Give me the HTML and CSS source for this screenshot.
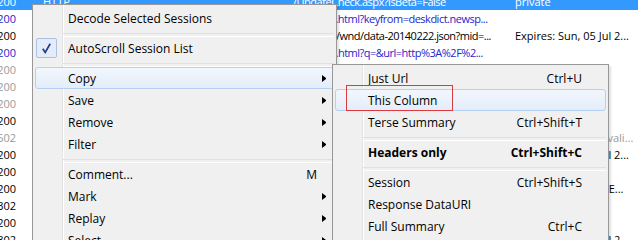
FILE: index.html
```html
<!DOCTYPE html>
<html lang="en">
<head>
    <meta charset="UTF-8">
    <title>Sessions context menu</title>
    <link rel="stylesheet" href="styles.css">
</head>
<body>
    <div class="sessions">
        <div class="row selected">
            <span class="c-result">200</span><span class="c-proto">HTTP</span>
            <span class="c-url">/UpdateCheck.aspx?isBeta=False</span><span class="c-cache">private</span>
        </div>
        <div class="row blue">
            <span class="c-result">200</span><span class="c-proto">HTTP</span>
            <span class="c-url">/m/index.html?keyfrom=deskdict.newsp...</span><span class="c-cache"></span>
        </div>
        <div class="row">
            <span class="c-result">200</span><span class="c-proto">HTTP</span>
            <span class="c-url">/pop_win/wnd/data-20140222.json?mid=...</span><span class="c-cache">Expires: Sun, 05 Jul 2...</span>
        </div>
        <div class="row blue">
            <span class="c-result">200</span><span class="c-proto">HTTP</span>
            <span class="c-url">/webLink.html?q=&amp;url=http%3A%2F%2...</span><span class="c-cache"></span>
        </div>
        <div class="row gray">
            <span class="c-result">200</span><span class="c-proto">HTTP</span>
            <span class="c-url">/stat.gif</span><span class="c-cache"></span>
        </div>
        <div class="row gray">
            <span class="c-result">200</span><span class="c-proto">HTTP</span>
            <span class="c-url">/stat.gif</span><span class="c-cache"></span>
        </div>
        <div class="row gray">
            <span class="c-result">200</span><span class="c-proto">HTTP</span>
            <span class="c-url">/stat.gif</span><span class="c-cache"></span>
        </div>
        <div class="row">
            <span class="c-result">200</span><span class="c-proto">HTTP</span>
            <span class="c-url">/index.html</span><span class="c-cache"></span>
        </div>
        <div class="row gray">
            <span class="c-result">502</span><span class="c-proto">HTTP</span>
            <span class="c-url">/favicon.ico</span><span class="c-cache">no-cache, must-revali...</span>
        </div>
        <div class="row">
            <span class="c-result">200</span><span class="c-proto">HTTP</span>
            <span class="c-url">/css/main.css</span><span class="c-cache">Expires: Sun, 05 Jul 2...</span>
        </div>
        <div class="row">
            <span class="c-result">200</span><span class="c-proto">HTTP</span>
            <span class="c-url">/js/app.js</span><span class="c-cache"></span>
        </div>
        <div class="row">
            <span class="c-result">200</span><span class="c-proto">HTTP</span>
            <span class="c-url">/img/logo.png</span><span class="c-cache">max-age=604800; E...</span>
        </div>
        <div class="row">
            <span class="c-result">302</span><span class="c-proto">HTTP</span>
            <span class="c-url">/login</span><span class="c-cache"></span>
        </div>
        <div class="row">
            <span class="c-result">200</span><span class="c-proto">HTTP</span>
            <span class="c-url">/home</span><span class="c-cache"></span>
        </div>
        <div class="row">
            <span class="c-result">302</span><span class="c-proto">HTTP</span>
            <span class="c-url">/go</span><span class="c-cache">Expires: Sun, 05 Jul 2...</span>
        </div>
    </div>

    <div class="menu ctx">
        <div class="item"><span class="label">Decode Selected Sessions</span></div>
        <div class="sep"></div>
        <div class="item">
            <span class="check">
                <svg width="9" height="11" viewBox="0 0 9 11"><path d="M0.8 5.8 L3.2 9.4 L8.2 0.8" fill="none" stroke="#1d3c8f" stroke-width="1.7"/></svg>
            </span>
            <span class="label">AutoScroll Session List</span>
        </div>
        <div class="sep"></div>
        <div class="item hot"><span class="label">Copy</span><span class="arrow"></span></div>
        <div class="item"><span class="label">Save</span><span class="arrow"></span></div>
        <div class="item"><span class="label">Remove</span><span class="arrow"></span></div>
        <div class="item"><span class="label">Filter</span><span class="arrow"></span></div>
        <div class="sep"></div>
        <div class="item"><span class="label">Comment...</span><span class="key">M</span><span class="no-arrow"></span></div>
        <div class="item"><span class="label">Mark</span><span class="arrow"></span></div>
        <div class="item"><span class="label">Replay</span><span class="arrow"></span></div>
        <div class="item"><span class="label">Select</span><span class="arrow"></span></div>
    </div>

    <div class="menu sub">
        <div class="item"><span class="label">Just Url</span><span class="key">Ctrl+U</span></div>
        <div class="item hot"><span class="label">This Column</span></div>
        <div class="item"><span class="label">Terse Summary</span><span class="key">Ctrl+Shift+T</span></div>
        <div class="sep"></div>
        <div class="item bold"><span class="label">Headers only</span><span class="key">Ctrl+Shift+C</span></div>
        <div class="sep"></div>
        <div class="item"><span class="label">Session</span><span class="key">Ctrl+Shift+S</span></div>
        <div class="item"><span class="label">Response DataURI</span></div>
        <div class="item"><span class="label">Full Summary</span><span class="key">Ctrl+C</span></div>
        <div class="sep"></div>
    </div>

    <div class="mark"></div>
</body>
</html>
```

FILE: styles.css
```css
* {
    box-sizing: border-box;
}
body {
    margin: 0;
    width: 638px;
    height: 240px;
    overflow: hidden;
    position: relative;
    background: #fff;
    font-family: "Open Sans", "Noto Sans", sans-serif;
    color: #000;
}

/* session list behind the menu */
.sessions {
    margin-top: -7px;
    font-size: 11px;
}
.row {
    display: grid;
    grid-template-columns: 16px 277px 222px 1fr;
    height: 17px;
    line-height: 17px;
    white-space: nowrap;
}
.row span {
    overflow: hidden;
}
.row .c-result {
    display: flex;
    justify-content: flex-end;
    overflow: visible;
}
.c-proto {
    padding-left: 27px;
}
.c-url {
    padding-right: 10px;
    letter-spacing: -0.5px;
}
.row.selected {
    background: #3399ff;
    color: #fff;
}
.row.blue {
    color: #2626c8;
}
.row.gray {
    color: #9a9a9a;
}

/* menus */
.menu {
    position: absolute;
    padding: 2px;
    border: 1px solid #979797;
    background-color: #f0f0f0;
    background-image: linear-gradient(to right, transparent 29px, #e2e3e3 29px, #e2e3e3 30px, #fff 30px, #fff 31px, transparent 31px);
    font-size: 12px;
    box-shadow: 2px 2px 2px rgba(0, 0, 0, 0.12);
}
.ctx {
    left: 32px;
    top: 4px;
    width: 305px;
}
.sub {
    left: 332px;
    top: 64px;
    width: 277px;
}
.item {
    display: flex;
    align-items: center;
    height: 22px;
    padding-left: 32px;
    padding-right: 7px;
    border: 1px solid transparent;
    border-radius: 3px;
    position: relative;
}
.sub .item {
    padding-right: 18px;
}
.item .label {
    flex: 1;
}
.item.hot {
    background: linear-gradient(#f2f7fd, #e3edf9);
    border-color: #b4d0f2;
}
.item.bold {
    font-weight: 700;
}
.key {
    margin-right: 5px;
}
.arrow,
.no-arrow {
    width: 4px;
    height: 7px;
}
.arrow {
    border-left: 4px solid #000;
    border-top: 3.5px solid transparent;
    border-bottom: 3.5px solid transparent;
}
.check {
    position: absolute;
    left: 0;
    top: 0;
    width: 21px;
    height: 20px;
    display: flex;
    align-items: center;
    justify-content: center;
    background: #e4ecf8;
    border: 1px solid #a9c3e8;
    border-radius: 2px;
}
.sep {
    height: 8px;
    margin-left: 28px;
    padding-top: 4px;
}
.sep::before {
    content: "";
    display: block;
    height: 2px;
    border-top: 1px solid #e0e0e0;
    border-bottom: 1px solid #fff;
}

/* red annotation box drawn over the screenshot */
.mark {
    position: absolute;
    left: 346px;
    top: 85px;
    width: 107px;
    height: 26px;
    border: 1px solid #dc3a3f;
}
```
